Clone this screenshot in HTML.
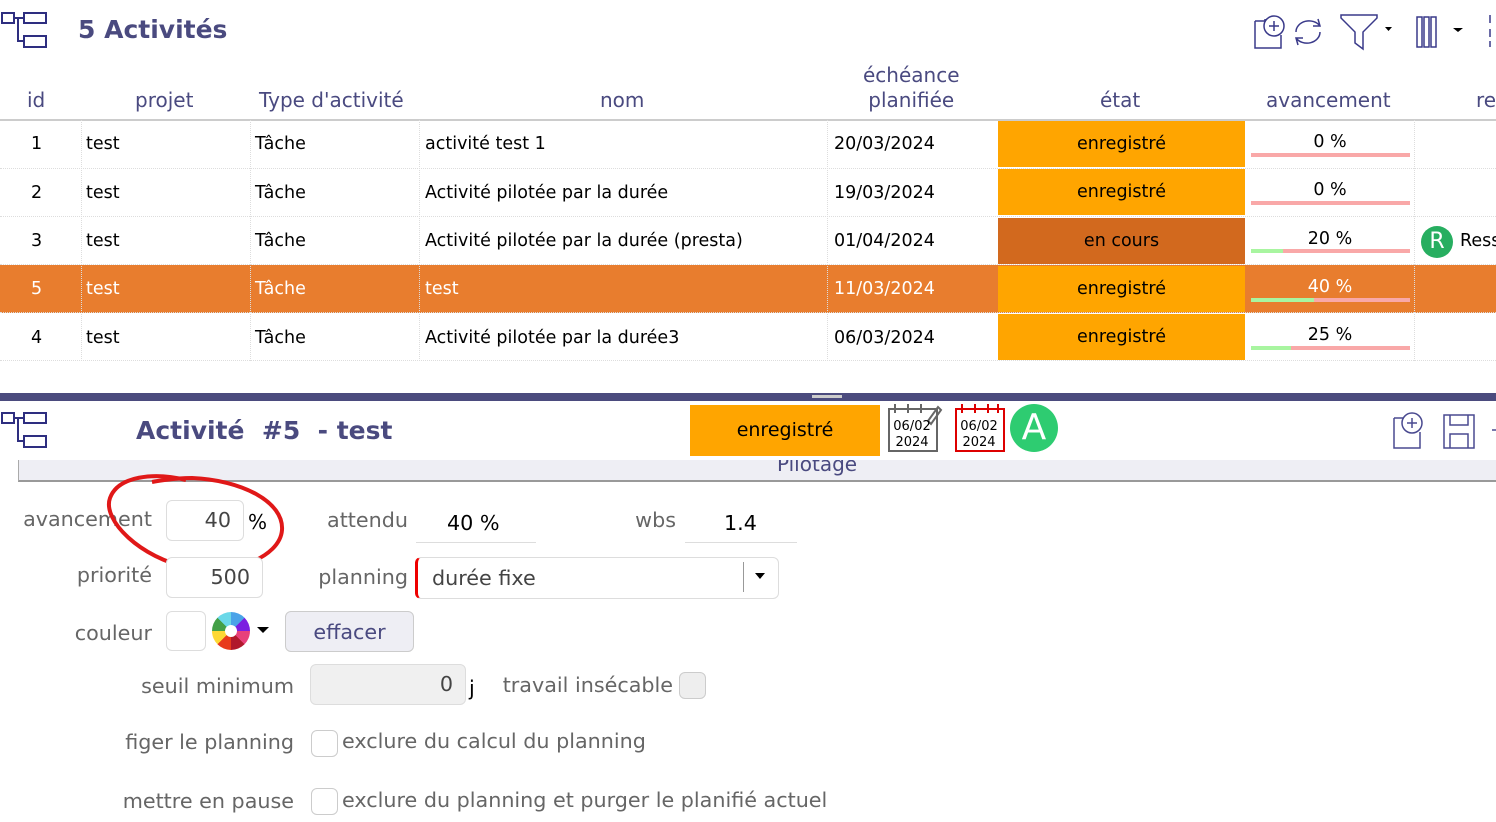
<!DOCTYPE html>
<html><head><meta charset="utf-8"><style>
*{box-sizing:border-box;margin:0;padding:0}
body{width:1496px;height:822px;overflow:hidden;background:#fff;font-family:"DejaVu Sans","Liberation Sans",sans-serif;position:relative}
.a{position:absolute;white-space:nowrap}
.h{color:#4a4a80;font-size:20px;top:88px}
.t{font-size:17.5px;color:#000}
.row{position:absolute;left:0;width:1496px;height:48px;border-bottom:1px dotted #ddd}
.vl{position:absolute;top:120px;height:241px;border-left:1px dotted #ddd}
.et{position:absolute;left:998px;width:247px;height:46px;background:#FFA500;text-align:center;line-height:46px;font-size:17.5px;color:#000}
.bar{position:absolute;left:1251px;width:159px;height:4px;background:#f9a8a8}
.bar i{display:block;height:4px;background:#a8f5a0}
.pc{position:absolute;left:1250px;width:160px;text-align:center;font-size:17.5px}
.lb{color:#666;font-size:20.7px;text-align:right}
.inp{position:absolute;border:1px solid #ddd;border-radius:6px;background:#fff;font-size:20.7px;color:#444;text-align:right;padding-right:12px}
.cb{position:absolute;width:27px;height:27px;border:1px solid #ccc;border-radius:6px;background:#fff}
</style></head><body>
<svg class="a" style="left:0;top:10px" width="50" height="40" viewBox="0 0 50 40" fill="none" stroke="#2e2e80" stroke-width="2"><rect x="2" y="3" width="12" height="10"/><rect x="24" y="3" width="22" height="10"/><rect x="24" y="26" width="22" height="11"/><path d="M14 8H24M18 8V31H24"/></svg>
<div class="a" style="left:78px;top:15px;font-size:25px;font-weight:bold;color:#4a4a7f">5 Activités</div>
<svg class="a" style="left:1252px;top:13px" width="240" height="38" viewBox="0 0 240 38" fill="none" stroke="#3a3a8a" stroke-width="1.5">
<path d="M3 8h10v-2M3 8v27h26V22"/><circle cx="22" cy="13" r="10"/><path d="M22 8v10M17 13h10"/>
<path d="M44 19a13 11 0 0 1 24-6M68 19a13 11 0 0 1-24 6M66 6l2 7-7 0M46 32l-2-7 7 0"/>
<path d="M89 2h36v3l-14 14v17l-8-6v-11L89 5z"/>
<path d="M133 14l7 0-3.5 4z" fill="#000" stroke="none"/>
<rect x="165" y="4" width="5" height="30"/><rect x="172" y="4" width="5" height="30"/><rect x="179" y="4" width="5" height="30"/>
<path d="M201 15h10l-5 4z" fill="#000" stroke="none"/>
<path d="M238 2v8M238 16v8M238 28v6"/></svg>
<div class="a h" style="left:27px">id</div>
<div class="a h" style="left:135px">projet</div>
<div class="a h" style="left:259px">Type d'activité</div>
<div class="a h" style="left:600px">nom</div>
<div class="a h" style="left:863px;top:63px;text-align:center;line-height:25px">échéance<br>planifiée</div>
<div class="a h" style="left:1100px">état</div>
<div class="a h" style="left:1266px">avancement</div>
<div class="a h" style="left:1476px">re</div>
<div class="a" style="left:0;top:119px;width:1496px;border-top:2px solid #ccc"></div>

<div class="row" style="top:121px"></div><div class="row" style="top:169px"></div><div class="row" style="top:217px"></div>
<div class="row" style="top:265px;background:#E87D2E"></div><div class="row" style="top:313px"></div>
<div class="vl" style="left:81px"></div><div class="vl" style="left:250px"></div><div class="vl" style="left:419px"></div><div class="vl" style="left:827px"></div><div class="vl" style="left:1414px"></div>

<div class="et" style="top:121px">enregistré</div>
<div class="et" style="top:169px">enregistré</div>
<div class="et" style="top:218px;background:#D2691E">en cours</div>
<div class="et" style="top:266px">enregistré</div>
<div class="et" style="top:314px">enregistré</div>

<div class="a t" style="left:31px;top:134px">1</div><div class="a t" style="left:86px;top:134px">test</div><div class="a t" style="left:255px;top:134px">Tâche</div><div class="a t" style="left:425px;top:134px">activité test 1</div><div class="a t" style="left:834px;top:134px">20/03/2024</div>
<div class="a t" style="left:31px;top:183px">2</div><div class="a t" style="left:86px;top:183px">test</div><div class="a t" style="left:255px;top:183px">Tâche</div><div class="a t" style="left:425px;top:183px">Activité pilotée par la durée</div><div class="a t" style="left:834px;top:183px">19/03/2024</div>
<div class="a t" style="left:31px;top:231px">3</div><div class="a t" style="left:86px;top:231px">test</div><div class="a t" style="left:255px;top:231px">Tâche</div><div class="a t" style="left:425px;top:231px">Activité pilotée par la durée (presta)</div><div class="a t" style="left:834px;top:231px">01/04/2024</div>
<div class="a t" style="left:31px;top:279px;color:#fff">5</div><div class="a t" style="left:86px;top:279px;color:#fff">test</div><div class="a t" style="left:255px;top:279px;color:#fff">Tâche</div><div class="a t" style="left:425px;top:279px;color:#fff">test</div><div class="a t" style="left:834px;top:279px;color:#fff">11/03/2024</div>
<div class="a t" style="left:31px;top:328px">4</div><div class="a t" style="left:86px;top:328px">test</div><div class="a t" style="left:255px;top:328px">Tâche</div><div class="a t" style="left:425px;top:328px">Activité pilotée par la durée3</div><div class="a t" style="left:834px;top:328px">06/03/2024</div>

<div class="pc" style="top:132px">0 %</div><div class="bar" style="top:153px"></div>
<div class="pc" style="top:180px">0 %</div><div class="bar" style="top:201px"></div>
<div class="pc" style="top:229px">20 %</div><div class="bar" style="top:249px"><i style="width:32px"></i></div>
<div class="pc" style="top:277px;color:#fff">40 %</div><div class="bar" style="top:298px"><i style="width:63px"></i></div>
<div class="pc" style="top:325px">25 %</div><div class="bar" style="top:346px"><i style="width:40px"></i></div>
<div class="a" style="left:1421px;top:226px;width:32px;height:32px;border-radius:50%;background:#27ae60;color:#fff;font-size:22px;text-align:center;line-height:32px">R</div>
<div class="a t" style="left:1460px;top:231px">Ress</div>

<div class="a" style="left:0;top:393px;width:1496px;height:8px;background:#4b4b7e"></div>
<div class="a" style="left:812px;top:395px;width:30px;height:3px;background:#ccc"></div>

<svg class="a" style="left:0;top:408px" width="50" height="44" viewBox="0 0 50 40" fill="none" stroke="#2e2e80" stroke-width="2"><rect x="2" y="3" width="12" height="10"/><rect x="24" y="3" width="22" height="10"/><rect x="24" y="26" width="22" height="11"/><path d="M14 8H24M18 8V31H24"/></svg>
<div class="a" style="left:136px;top:416px;font-size:25px;font-weight:bold;color:#4a4a7f">Activité&nbsp; #5 &nbsp;- test</div>
<div class="a" style="left:690px;top:405px;width:190px;height:51px;background:#FFA500;text-align:center;line-height:51px;font-size:19px">enregistré</div>
<svg class="a" style="left:886px;top:401px" width="126" height="52" viewBox="0 0 126 52" fill="none" stroke-width="2">
<path d="M3 8h48v42H3z M3 8" stroke="#666"/><path d="M9 3v9M22 3v9M35 3v9M42 20l10-14 3 3-10 14z" stroke="#666"/>
<path d="M70 8h48v42H70z" stroke="#d00"/><path d="M76 3v9M89 3v9M102 3v9M112 3v9" stroke="#d00"/></svg>
<div class="a" style="left:888px;top:419px;width:48px;font-size:13px;text-align:center;line-height:16px">06/02<br>2024</div>
<div class="a" style="left:955px;top:419px;width:48px;font-size:13px;text-align:center;line-height:16px">06/02<br>2024</div>
<div class="a" style="left:1010px;top:404px;width:48px;height:48px;border-radius:50%;background:#2ecc71;color:#fff;font-size:36px;text-align:center;line-height:48px">A</div>
<svg class="a" style="left:1392px;top:412px" width="104" height="38" viewBox="0 0 104 38" fill="none" stroke="#4a4a90" stroke-width="1.5"><path d="M2 6h10M2 6v30h26V20"/><circle cx="20" cy="11" r="10"/><path d="M20 6v10M15 11h10"/><path d="M52 3h30v33H52z"/><path d="M58 3v10h18V3M58 36V22h18v14"/><path d="M100 18h4"/></svg>

<div class="a" style="left:18px;top:460px;width:1478px;height:22px;background:#eeeef4;border-left:1px solid #aaa;border-bottom:2px solid #999;overflow:hidden"><div style="position:absolute;left:758px;top:-8px;font-size:20px;color:#4a4a80">Pilotage</div></div>

<div class="a lb" style="left:0;width:152px;top:507px">avancement</div>
<div class="inp" style="left:166px;top:500px;width:78px;height:41px;line-height:39px">40</div>
<div class="a" style="left:248px;top:510px;font-size:20px">%</div>
<svg class="a" style="left:104px;top:470px" width="186" height="112" viewBox="0 0 186 112" fill="none" stroke="#e01818" stroke-width="4"><path d="M82 10C50 2 14 6 6 28c-8 22 30 60 80 70 40 8 90-10 92-38 2-28-40-50-90-52-20 0-40 4-40 4"/></svg>
<div class="a lb" style="left:200px;width:208px;top:508px">attendu</div>
<div class="a" style="left:447px;top:511px;font-size:20.7px">40 %</div>
<div class="a" style="left:416px;top:542px;width:120px;border-top:1px solid #ddd"></div>
<div class="a lb" style="left:500px;width:176px;top:508px">wbs</div>
<div class="a" style="left:724px;top:511px;font-size:20.7px">1.4</div>
<div class="a" style="left:685px;top:542px;width:112px;border-top:1px solid #ddd"></div>

<div class="a lb" style="left:0;width:152px;top:563px">priorité</div>
<div class="inp" style="left:166px;top:557px;width:97px;height:41px;line-height:39px">500</div>
<div class="a lb" style="left:200px;width:208px;top:565px">planning</div>
<div class="a" style="left:415px;top:557px;width:364px;height:42px;border:1px solid #ddd;border-left:3px solid #e00;border-radius:6px;font-size:20.7px;color:#444;line-height:40px;padding-left:14px">durée fixe</div>
<div class="a" style="left:743px;top:562px;height:30px;border-left:1px solid #999"></div>
<div class="a" style="left:755px;top:573px;border:5px solid transparent;border-top:6px solid #000"></div>

<div class="a lb" style="left:0;width:152px;top:621px">couleur</div>
<div class="a" style="left:166px;top:611px;width:40px;height:40px;border:1px solid #ddd;border-radius:6px"></div>
<div class="a" style="left:212px;top:612px;width:38px;height:38px;border-radius:50%;background:conic-gradient(#4aa3e8 0 45deg,#7b1fe0 45deg 90deg,#e8407a 90deg 135deg,#b0182c 135deg 180deg,#e83a1c 180deg 225deg,#fdd835 225deg 270deg,#43a047 270deg 315deg,#6ad8e8 315deg 360deg)"></div>
<div class="a" style="left:225px;top:625px;width:12px;height:12px;border-radius:50%;background:#fff"></div>
<div class="a" style="left:257px;top:627px;border:6px solid transparent;border-top:6px solid #000"></div>
<div class="a" style="left:285px;top:611px;width:129px;height:41px;border:1px solid #ccc;border-radius:6px;background:#eeeef4;color:#4a4a80;font-size:20.7px;text-align:center;line-height:40px">effacer</div>

<div class="a lb" style="left:0;width:294px;top:674px">seuil minimum</div>
<div class="inp" style="left:310px;top:664px;width:156px;height:41px;line-height:39px;background:#f0f0f0">0</div>
<div class="a" style="left:469px;top:676px;font-size:20.7px">j</div>
<div class="a lb" style="left:480px;width:193px;top:673px">travail insécable</div>
<div class="cb" style="left:679px;top:672px;background:#eee"></div>

<div class="a lb" style="left:0;width:294px;top:730px">figer le planning</div>
<div class="cb" style="left:311px;top:730px"></div>
<div class="a lb" style="left:342px;top:729px;text-align:left">exclure du calcul du planning</div>

<div class="a lb" style="left:0;width:294px;top:789px">mettre en pause</div>
<div class="cb" style="left:311px;top:788px"></div>
<div class="a lb" style="left:342px;top:788px;text-align:left">exclure du planning et purger le planifié actuel</div>
</body></html>
